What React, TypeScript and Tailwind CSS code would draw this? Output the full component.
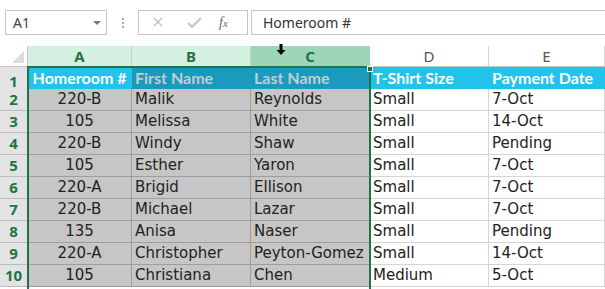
type Row = [string, string, string, string, string]

const rows: Row[] = [
  ['220-B', 'Malik', 'Reynolds', 'Small', '7-Oct'],
  ['105', 'Melissa', 'White', 'Small', '14-Oct'],
  ['220-B', 'Windy', 'Shaw', 'Small', 'Pending'],
  ['105', 'Esther', 'Yaron', 'Small', '7-Oct'],
  ['220-A', 'Brigid', 'Ellison', 'Small', '7-Oct'],
  ['220-B', 'Michael', 'Lazar', 'Small', '7-Oct'],
  ['135', 'Anisa', 'Naser', 'Small', 'Pending'],
  ['220-A', 'Christopher', 'Peyton-Gomez', 'Small', '14-Oct'],
  ['105', 'Christiana', 'Chen', 'Medium', '5-Oct'],
]

const cellFont = { fontFamily: '"DejaVu Sans", "Liberation Sans", sans-serif' }
const headFont = { fontFamily: 'Lato, "DejaVu Sans", sans-serif' }
const uiFont = { fontFamily: '"Noto Sans", "Liberation Sans", sans-serif' }

function FormulaBar() {
  return (
    <div className="flex items-center h-[46px] pt-[10px] pb-[11px] pl-[5px]" style={uiFont}>
      <div className="flex items-center justify-between w-[102px] h-[25px] border border-[#c6c6c6] pl-[7px] pr-[4px] text-[14px] text-[#444]">
        <span>A1</span>
        <span className="w-0 h-0 border-l-[4px] border-r-[4px] border-t-[4px] border-l-transparent border-r-transparent border-t-[#777] mr-[1px]" />
      </div>
      <div className="w-[31px] flex flex-col items-center gap-[2px]">
        <span className="w-[2px] h-[2px] bg-[#aaa]" />
        <span className="w-[2px] h-[2px] bg-[#aaa]" />
        <span className="w-[2px] h-[2px] bg-[#aaa]" />
      </div>
      <div className="flex items-center w-[110px] h-[25px] border border-[#c6c6c6]">
        <svg width="36" height="23" viewBox="0 0 36 23" className="ml-[1px]">
          <path d="M14 7 L22 15 M22 7 L14 15" stroke="#c2c2c2" strokeWidth="1.5" fill="none" />
        </svg>
        <svg width="36" height="23" viewBox="0 0 36 23">
          <path d="M12 12 L16 16 L25 7" stroke="#c2c2c2" strokeWidth="2" fill="none" />
        </svg>
        <span className="ml-[7px] text-[14px] italic text-[#666]" style={{ fontFamily: '"Liberation Serif", serif' }}>
          f<span className="text-[11px]">x</span>
        </span>
      </div>
      <div className="flex items-center flex-1 h-[25px] ml-[3px] border-y border-l border-[#c6c6c6] pl-[11px] text-[14px] text-[#333]">
        Homeroom #
      </div>
    </div>
  )
}

function ColHeaders() {
  const base = 'flex items-center justify-center h-[21px] border-r border-b text-[15px]'
  return (
    <div className="grid grid-cols-[28px_104px_119px_119px_119px_116px]" style={uiFont}>
      <div className="relative h-[21px] bg-white border-r border-b border-[#c6c6c6]">
        <span className="absolute right-[3px] bottom-[3px] w-0 h-0" style={{ borderBottom: '12px solid #dcdcdc', borderLeft: '12px solid transparent' }} />
      </div>
      <div className={`${base} bg-[#d3f0e0] border-[#b9d9c6] text-[#217346] font-bold`}>A</div>
      <div className={`${base} bg-[#d3f0e0] border-[#b9d9c6] text-[#217346] font-bold`}>B</div>
      <div className={`${base} relative bg-[#9fd5b7] border-[#9fd5b7] text-[#217346] font-bold`}>
        C
        <svg width="10" height="12" viewBox="0 0 10 12" className="absolute left-[25px] top-[-2px]">
          <path d="M3.5 0 H6.5 V6 H9.5 L5 11 L0.5 6 H3.5 Z" fill="#000" />
        </svg>
      </div>
      <div className={`${base} bg-white border-[#d4d4d4] border-b-[#c6c6c6] text-[#555]`}>D</div>
      <div className={`${base} bg-white border-[#d4d4d4] border-b-[#c6c6c6] text-[#555]`}>E</div>
    </div>
  )
}

function Sheet() {
  const rowHead = 'flex items-center justify-center bg-[#e3e3e3] border-r border-b border-[#bdbdbd] text-[15px] font-bold text-[#217346]'
  const sel = 'flex items-center bg-[#c6c6c6] border-r border-b border-[#9e9e9e] text-[15px] text-[#222] px-[3px] whitespace-nowrap overflow-hidden'
  const plain = 'flex items-center bg-white border-r border-b border-[#d4d4d4] text-[15px] text-[#222] px-[3px] whitespace-nowrap overflow-hidden'
  const hdrOn = 'flex items-end pb-[3px] bg-[#22c3eb] border-r border-[#22c3eb] text-[16px] font-bold text-white px-[3px] whitespace-nowrap overflow-hidden'
  const hdrSel = 'flex items-end pb-[3px] bg-[#1a9abd] border-r border-[#1a9abd] text-[16px] font-bold text-[#c3cdd1] px-[3px] whitespace-nowrap overflow-hidden'
  return (
    <div className="relative">
      <div className="grid grid-cols-[28px_104px_119px_119px_119px_116px] auto-rows-[22px]" style={cellFont}>
        <div className={`${rowHead} h-[26px] pt-[3px] leading-[20px]`} style={uiFont}>1</div>
        <div className={`${hdrOn} h-[26px] justify-center`} style={headFont}>Homeroom #</div>
        <div className={`${hdrSel} h-[26px]`} style={headFont}>First Name</div>
        <div className={`${hdrSel} h-[26px]`} style={headFont}>Last Name</div>
        <div className={`${hdrOn} h-[26px]`} style={headFont}>T-Shirt Size</div>
        <div className={`${hdrOn} h-[26px]`} style={headFont}>Payment Date</div>
        {rows.map((r, i) => (
          <div key={i} className="contents">
            <div className={rowHead} style={uiFont}>{i + 2}</div>
            <div className={`${sel} justify-center`}>{r[0]}</div>
            <div className={sel}>{r[1]}</div>
            <div className={sel}>{r[2]}</div>
            <div className={plain}>{r[3]}</div>
            <div className={plain}>{r[4]}</div>
          </div>
        ))}
      </div>
      {/* selection outline over columns A:C */}
      <div className="absolute left-[27px] top-[-1px] w-[344px] h-[300px] border-2 border-[#217346] pointer-events-none" />
      <div className="absolute left-[367px] top-[-1px] w-[6px] h-[6px] bg-[#217346] border border-white" />
    </div>
  )
}

export default function App() {
  return (
    <div className="w-[605px] h-[289px] overflow-hidden bg-white">
      <FormulaBar />
      <ColHeaders />
      <Sheet />
    </div>
  )
}
